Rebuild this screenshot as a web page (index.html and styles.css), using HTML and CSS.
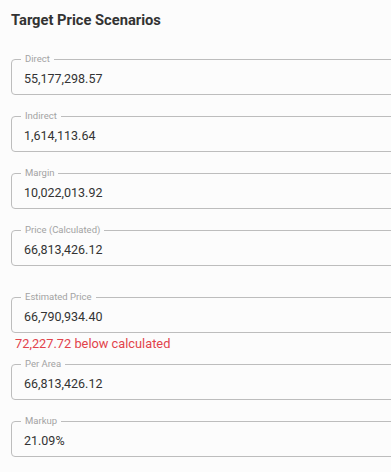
FILE: index.html
```html
<!DOCTYPE html>
<html lang="en">

<head>
    <meta charset="UTF-8">
    <meta name="viewport" content="width=device-width, initial-scale=1.0">
    <title>Target Price Scenarios</title>
    <link rel="stylesheet" href="styles.css">
</head>

<body>

    <h1 class="title">Target Price Scenarios</h1>

    <div class="fields">
        <div class="group">
            <div class="field">
                <span class="field-label">Direct</span>
                <span class="field-value">55,177,298.57</span>
            </div>
        </div>
        <div class="group">
            <div class="field">
                <span class="field-label">Indirect</span>
                <span class="field-value">1,614,113.64</span>
            </div>
        </div>
        <div class="group">
            <div class="field">
                <span class="field-label">Margin</span>
                <span class="field-value">10,022,013.92</span>
            </div>
        </div>
        <div class="group group-spaced">
            <div class="field">
                <span class="field-label">Price (Calculated)</span>
                <span class="field-value">66,813,426.12</span>
            </div>
        </div>
        <div class="group">
            <div class="field">
                <span class="field-label">Estimated Price</span>
                <span class="field-value">66,790,934.40</span>
            </div>
            <div class="helper helper-error">72,227.72 below calculated</div>
        </div>
        <div class="group">
            <div class="field">
                <span class="field-label">Per Area</span>
                <span class="field-value">66,813,426.12</span>
            </div>
        </div>
        <div class="group">
            <div class="field">
                <span class="field-label">Markup</span>
                <span class="field-value">21.09%</span>
            </div>
        </div>
    </div>

</body>

</html>
```

FILE: styles.css
```css
body {
    margin: 0;
    padding: 10px 0 0 11px;
    font-family: Roboto, "Noto Sans", sans-serif;
    background-color: #fcfcfc;
    color: #333;
    overflow: hidden;
}

.title {
    margin: 0 0 29px 0;
    font-size: 14.7px;
    line-height: 20px;
    font-weight: 700;
    color: #333;
}

.fields {
    width: 420px;
}

.group {
    margin-bottom: 21px;
}

.group-spaced {
    margin-bottom: 31px;
}

.field {
    position: relative;
    height: 36px;
    box-sizing: border-box;
    border: 1px solid #bdbdbd;
    border-radius: 4px;
    padding: 2px 12px 0 12px;
    display: flex;
    align-items: center;
}

.field-label {
    position: absolute;
    top: -7px;
    left: 9px;
    padding: 0 4px;
    font-size: 9.5px;
    line-height: 12px;
    color: #a3a3a3;
    background-color: #fcfcfc;
}

.field-value {
    font-size: 12.5px;
    color: #333;
}

.helper {
    margin: 2px 0 -10px 4px;
    font-size: 12.8px;
    line-height: 18px;
}

.helper-error {
    color: #e2434b;
}
```
